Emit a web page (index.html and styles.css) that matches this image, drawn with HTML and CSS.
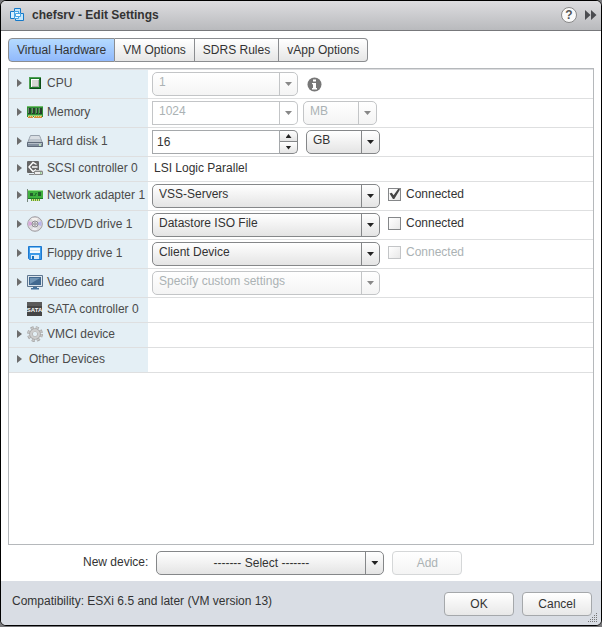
FILE: index.html
```html
<!DOCTYPE html>
<html lang="en">
<head>
<meta charset="utf-8">
<title>chefsrv - Edit Settings</title>
<link rel="stylesheet" href="styles.css">
</head>
<body>
<main class="dialog">
  <header class="titlebar">
    <svg class="vm-icon" width="16" height="16" viewBox="0 0 16 16" stroke="#1679c8">
      <path d="M5.500 1.500h6v8h-6z" fill="#bfe5fc"/><path d="M1.500 4.500h8v7h-8z" fill="#d9f0ff"/><path d="M6.500 6.500h8v7h-8z" fill="#c5e8fd"/><path d="M5.500 4.500h4v7h-4z" fill="#f2fbff" stroke="#4aa5e4"/><path d="M6.500 6.500h5v3h-5z" fill="#f2fbff" stroke="#4aa5e4"/>
    </svg>
    <h1 class="title">chefsrv - Edit Settings</h1>
    <button class="icon-button help" aria-label="Help">?</button>
    <button class="icon-button" aria-label="Expand">
      <svg width="12" height="12" viewBox="0 0 12 12" fill="#4b4c50"><path d="M0 1l5.500 5L0 11zM6 1l5.500 5L6 11z"/></svg>
    </button>
  </header>

  <div class="content">
    <div class="tabs" role="tablist">
      <button class="tab tab-active" role="tab" aria-selected="true">Virtual Hardware</button>
      <button class="tab" role="tab">VM Options</button>
      <button class="tab" role="tab">SDRS Rules</button>
      <button class="tab" role="tab">vApp Options</button>
    </div>

    <section class="panel">
      <div class="row">
        <div class="name"><button class="expander" aria-label="Expand CPU"></button>
          <svg class="icon" width="16" height="16" viewBox="0 0 16 16"><path d="M2 2h12v12H2z" fill="#1f7d2c"/><path d="M2 2h12v1H3v11H2z" fill="#4fa054"/><path d="M14 3v11H3v-1h10V3z" fill="#0b4d16"/><path d="M4 4h8v8H4z" fill="#d5d8d3"/><path d="M4 4h8v1H5v7H4z" fill="#fff"/><path d="M5 11.500h6.500V5" fill="none" stroke="#a9ada9"/></svg>
          <label for="cpu">CPU</label></div>
        <div class="value">
          <span class="select medium off"><select id="cpu" disabled><option>1</option></select></span>
          <svg class="info" width="15" height="15" viewBox="0 0 15 15"><circle cx="7.500" cy="7.500" r="7" fill="#777"/><path d="M6 2.500h3v2H6zM5 6h4v5h1v1.500H5V11h1V7.300H5z" fill="#fff"/></svg>
        </div>
      </div>
      <div class="row">
        <div class="name"><button class="expander" aria-label="Expand Memory"></button>
          <svg class="icon" width="16" height="16" viewBox="0 0 16 16"><path d="M0 2h16v11H0z" fill="#2f8f35"/><path d="M0 2h16v1H0z" fill="#6fbd6a"/><path d="M1 4h3v6H1zM5 4h3v6H5zM9 4h2v6H9zM12 4h3v6h-3z" fill="#26412c"/><path d="M1.500 4v5M5.500 4v5M9.500 4v5M12.500 4v5" stroke="#70876f"/><path d="M1 11.500h14" stroke="#8fcf76"/><path d="M1 13h5M7 13h8" stroke="#d0913a" stroke-width="2"/><path d="M1 12.500h14" stroke="#ecd486" stroke-dasharray="1 1"/></svg>
          <label for="memory">Memory</label></div>
        <div class="value">
          <span class="combo medium"><input id="memory" value="1024" disabled><button class="combo-button" aria-label="Memory sizes" disabled></button></span>
          <span class="select small off after-combo"><select aria-label="Memory unit" disabled><option>MB</option></select></span>
        </div>
      </div>
      <div class="row">
        <div class="name"><button class="expander" aria-label="Expand Hard disk 1"></button>
          <svg class="icon" width="16" height="16" viewBox="0 0 16 16"><path d="M3.500 2.500h9l3 7.500H.5z" fill="#bcc4cc" stroke="#98a2ac"/><path d="M4 3h8l1.500 3h-11z" fill="#d9dee3"/><path d="M.5 9.500h15v4H.5z" fill="#8390a0" stroke="#5f6b7a"/><path d="M1 10.500h14" stroke="#b4bec8"/><path d="M12 11h2v2h-2z" fill="#bfe0b9"/></svg>
          <label for="disk">Hard disk 1</label></div>
        <div class="value">
          <span class="stepper medium"><input id="disk" value="16"><span class="steps"><button aria-label="Increase" class="step step-up"></button><button aria-label="Decrease" class="step"></button></span></span>
          <span class="select small"><select aria-label="Disk unit"><option>GB</option></select></span>
        </div>
      </div>
      <div class="row row-short">
        <div class="name"><button class="expander" aria-label="Expand SCSI controller 0"></button>
          <svg class="icon" width="16" height="16" viewBox="0 0 16 16"><rect x="0" y="1" width="12" height="12" rx="1" fill="#666"/><path d="M9.500 4.500L6 2.500 2 7l4 4.500 3-2M5 7h5.500" fill="none" stroke="#fff" stroke-width="1.400"/><path d="M8 10h7l1 2H7z" fill="#c9cbca"/><path d="M7.500 11.500h8v3h-8z" fill="#eee" stroke="#888"/><path d="M13 12.500h1.500v1H13z" fill="#42a339"/><path d="M2 14.500h5" stroke="#888"/></svg>
          <span>SCSI controller 0</span></div>
        <div class="value"><span class="static">LSI Logic Parallel</span></div>
      </div>
      <div class="row">
        <div class="name"><button class="expander" aria-label="Expand Network adapter 1"></button>
          <svg class="icon" width="16" height="16" viewBox="0 0 16 16"><path d="M0 2h1v13H0z" fill="#74857a"/><path d="M1 3h15v9H1z" fill="#3fb03f"/><path d="M1 3h15v1H1z" fill="#93dc88"/><path d="M1 11h15v1H1z" fill="#1e7f28"/><path d="M3 6h3v3H3zM11 5h3v4h-3z" fill="#235c2c"/><path d="M6.500 8.500h2v-2H10" stroke="#1d7a29" fill="none"/><path d="M4 12h9v2H4z" fill="#4fa343"/><path d="M5.500 12v2M7.500 12v2M9.500 12v2M11.500 12v2" stroke="#e5dc78"/></svg>
          <label for="network">Network adapter 1</label></div>
        <div class="value">
          <span class="select large"><select id="network"><option>VSS-Servers</option></select></span>
          <label class="check"><input type="checkbox" checked>Connected</label>
        </div>
      </div>
      <div class="row">
        <div class="name"><button class="expander" aria-label="Expand CD/DVD drive 1"></button>
          <svg class="icon" width="16" height="16" viewBox="0 0 16 16"><circle cx="8" cy="8" r="7.300" fill="#dcdadd" stroke="#a19ea3"/><path d="M8 8L1.500 5v5z" fill="#d9a8dd"/><path d="M8 8l6.500-3v5z" fill="#b9b5ea"/><path d="M8 8L4 2h7z" fill="#f3f1ef"/><path d="M8 8l-3 6h5z" fill="#efeff2"/><circle cx="8" cy="8" r="3" fill="#e5e5e5" stroke="#8c8a90"/><circle cx="8" cy="8" r="1.200" fill="#fff" stroke="#858088"/></svg>
          <label for="cd">CD/DVD drive 1</label></div>
        <div class="value">
          <span class="select large"><select id="cd"><option>Datastore ISO File</option></select></span>
          <label class="check"><input type="checkbox">Connected</label>
        </div>
      </div>
      <div class="row">
        <div class="name"><button class="expander" aria-label="Expand Floppy drive 1"></button>
          <svg class="icon" width="16" height="16" viewBox="0 0 16 16"><path d="M1.500 1.500h13v13h-12l-1-1z" fill="#3c9ae8" stroke="#1d78d0"/><path d="M3 2h10v6H3z" fill="#f4faff"/><path d="M3 2h10v1H3z" fill="#73bcf2"/><path d="M3 5.500h10" stroke="#cfe6f7"/><path d="M4 10h8v4H4z" fill="#dcecf9"/><path d="M5 11h2v3H5z" fill="#176fb9"/></svg>
          <label for="floppy">Floppy drive 1</label></div>
        <div class="value">
          <span class="select large"><select id="floppy"><option>Client Device</option></select></span>
          <label class="check check-off"><input type="checkbox" disabled>Connected</label>
        </div>
      </div>
      <div class="row">
        <div class="name"><button class="expander" aria-label="Expand Video card"></button>
          <svg class="icon" width="16" height="16" viewBox="0 0 16 16"><path d="M.5 1.500h15v11H.5z" fill="#dce5ec" stroke="#5d7690"/><path d="M2 3h12v8H2z" fill="#42698f"/><path d="M3 4h10L3 10z" fill="#7195b5"/><path d="M6 13h4v1h2v1.500H4V14h2z" fill="#44719b"/></svg>
          <label for="video">Video card</label></div>
        <div class="value">
          <span class="select large off"><select id="video" disabled><option>Specify custom settings</option></select></span>
        </div>
      </div>
      <div class="row row-short">
        <div class="name name-leaf">
          <svg class="icon" width="16" height="16" viewBox="0 0 16 16"><path d="M0 1h15v14H0z" fill="#454545"/><path d="M0 1h15v4H0z" fill="#5b5b5b"/><text class="sata" x="7.500" y="11" text-anchor="middle">SATA</text></svg>
          <span>SATA controller 0</span></div>
        <div class="value"></div>
      </div>
      <div class="row row-short">
        <div class="name"><button class="expander" aria-label="Expand VMCI device"></button>
          <svg class="icon" width="16" height="16" viewBox="0 0 16 16"><circle cx="8" cy="8" r="6.400" fill="none" stroke="#a0a0a0" stroke-width="3" stroke-dasharray="2.900 2.126"/><circle cx="8" cy="8" r="6.300" fill="none" stroke="#c8c8c8" stroke-width="2" stroke-dasharray="2.300 2.648" stroke-dashoffset="-.3"/><circle cx="8" cy="8" r="4" fill="#e4eff5" stroke="#a6a6a6" stroke-width="3.600"/><circle cx="8" cy="8" r="3.800" fill="none" stroke="#cecece" stroke-width="2.400"/></svg>
          <span>VMCI device</span></div>
        <div class="value"></div>
      </div>
      <div class="row row-short">
        <div class="name"><button class="expander" aria-label="Expand Other Devices"></button><span class="name-plain">Other Devices</span></div>
        <div class="value"></div>
      </div>
    </section>

    <div class="new-device">
      <label for="device">New device:</label>
      <span class="select large centered"><select id="device"><option>------- Select -------</option></select></span>
      <button class="button" disabled>Add</button>
    </div>
  </div>

  <footer class="footer">
    <span class="compatibility">Compatibility: ESXi 6.5 and later (VM version 13)</span>
    <button class="button">OK</button>
    <button class="button">Cancel</button>
    <svg class="grip" width="10" height="10" viewBox="0 0 10 10" stroke="#777" stroke-dasharray="1 1"><path d="M8 .5h1M6 2.500h4M4 4.500h6M2 6.500h8M0 8.500h10"/></svg>
  </footer>
</main>
</body>
</html>
```
FILE: styles.css
```css
* {
  box-sizing: border-box;
}

body {
  margin: 0;
  min-height: 100vh;
  display: flex;
  padding: 0 0 1px;
  background: #77777a;
  color: #333;
  font: 12px/14px "Liberation Sans", Arial, sans-serif;
}

button,
input,
select {
  margin: 0;
  color: inherit;
  font: inherit;
}

.dialog {
  flex: 1;
  display: flex;
  flex-direction: column;
  border: 1px solid #000;
  border-radius: 6px;
  background: #fff;
  overflow: hidden;
}

.titlebar {
  display: flex;
  align-items: center;
  height: 30px;
  padding: 0 4px 2px 8px;
  border-bottom: 1px solid #77787b;
  background: linear-gradient(#dddde0, #b9babd);
}

.title {
  flex: 1;
  margin: 0 0 0 7px;
  font-size: 12px;
  line-height: 14px;
}

.icon-button {
  display: flex;
  margin-left: 8px;
  padding: 0;
  border: 0;
  background: none;
}

.help {
  justify-content: center;
  align-items: center;
  width: 16px;
  height: 16px;
  border: 1px solid #888;
  border-radius: 50%;
  background: #fafafa;
  color: #555;
  font-weight: bold;
}

.content {
  flex: 1;
  display: flex;
  flex-direction: column;
  padding: 7px 7px 6px;
}

.tabs {
  display: flex;
}

.tab {
  height: 24px;
  padding: 0 8px;
  border: 1px solid #8b8d90;
  border-left-width: 0;
  background: linear-gradient(#fff, #e6e6e6);
}

.tab:first-child {
  border-left-width: 1px;
  border-radius: 4px 0 0 4px;
}

.tab:last-child {
  border-radius: 0 4px 4px 0;
}

.tab-active {
  background: linear-gradient(#b5dafe, #91b9fc);
}

.panel {
  flex: 1;
  margin-top: 6px;
  padding-top: 1px;
  border: 1px solid #b5b8bb;
  box-shadow: inset 0 1px #dcdde0;
}

.row {
  display: grid;
  grid-template-columns: 139px 1fr;
  height: 29px;
  border-bottom: 1px solid #dedfe0;
}

.row-short {
  height: 25px;
}

.name {
  display: flex;
  align-items: center;
  padding: 0 0 2px 8px;
  background: #e4eff5;
  color: #4b4b4b;
  white-space: nowrap;
}

.expander {
  width: 5px;
  height: 8px;
  padding: 0;
  border: 0;
  background: #6c6c6c;
  clip-path: polygon(0 0, 100% 50%, 0 100%);
}

.icon {
  margin: 0 4px 0 5px;
}

.name-leaf .icon {
  margin-left: 10px;
}

.sata {
  fill: #fff;
  font-size: 6px;
  font-weight: bold;
}

.name-plain {
  margin-left: 7px;
}

.value {
  display: flex;
  align-items: center;
  gap: 8px;
  padding-left: 4px;
}

.static {
  padding: 0 0 2px 2px;
}

.medium {
  width: 146px;
}

.small {
  width: 74px;
}

.large {
  width: 228px;
}

.after-combo {
  margin-left: -3px;
}

.select {
  position: relative;
  display: flex;
  height: 24px;
}

.select select {
  width: 100%;
  padding: 0 20px 4px 6px;
  border: 1px solid #858789;
  border-radius: 5px;
  background: linear-gradient(#fff, #e4e4e4);
  appearance: none;
}

.select::before {
  content: "";
  position: absolute;
  inset: 1px 18px 1px auto;
  width: 1px;
  background: #858789;
}

.select::after {
  content: "";
  position: absolute;
  right: 6px;
  top: 10px;
  width: 7px;
  height: 4px;
  background: #222;
  clip-path: polygon(0 0, 100% 0, 50% 100%);
}

.off select {
  border-color: #c3c5c7;
  background: linear-gradient(#fff, #f4f4f4);
  color: #abb2b4;
  opacity: 1;
}

.off::before {
  background: #c3c5c7;
}

.off::after {
  background: #888;
}

.select.centered select {
  padding: 0 24px 0 6px;
  text-align: center;
  text-align-last: center;
}

.combo,
.stepper {
  display: flex;
  height: 24px;
}

.combo input,
.stepper input {
  flex: 1;
  min-width: 0;
  padding: 0 4px;
  border: 1px solid #a5a8ab;
  background: #fff;
}

.combo input {
  padding: 0 6px 4px;
  border-color: #c3c5c7;
  color: #abb2b4;
}

.combo-button {
  display: grid;
  place-items: center;
  width: 18px;
  padding: 0;
  border: 1px solid #c3c5c7;
  border-left: 0;
  border-radius: 0 5px 5px 0;
  background: #fff;
}

.combo-button::after,
.step::after {
  content: "";
  width: 7px;
  height: 4px;
  background: #888;
  clip-path: polygon(0 0, 100% 0, 50% 100%);
}

.steps {
  display: grid;
  grid-template-rows: 1fr 1fr;
  width: 18px;
}

.step {
  display: grid;
  place-items: center;
  padding: 0;
  border: 1px solid #858789;
  border-width: 0 1px 1px 0;
  border-radius: 0 0 5px 0;
  background: linear-gradient(#fff, #e4e4e4);
}

.step-up {
  border-width: 1px 1px 1px 0;
  border-radius: 0 5px 0 0;
}

.step::after {
  width: 6px;
  background: #222;
}

.step-up::after {
  clip-path: polygon(50% 0, 100% 100%, 0 100%);
}

.check {
  display: flex;
  align-items: center;
  gap: 5px;
  padding-bottom: 4px;
}

.check input {
  display: grid;
  width: 13px;
  height: 13px;
  border: 1px solid #858789;
  background: linear-gradient(135deg, #fff, #e8e8e8);
  appearance: none;
}

.check input:checked::before {
  content: "";
  background: #444;
  clip-path: polygon(5% 45%, 25% 38%, 42% 62%, 86% 0, 100% 8%, 48% 95%, 36% 95%);
}

.check-off {
  color: #abb2b4;
}

.check-off input {
  border-color: #c3c5c7;
}

.info {
  margin-left: 1px;
}

.new-device {
  display: flex;
  align-items: center;
  justify-content: flex-start;
  gap: 8px;
  margin-top: 6px;
  padding-left: 75px;
}

.new-device label {
  padding-bottom: 2px;
}

.button {
  width: 70px;
  height: 24px;
  padding: 0;
  border: 1px solid #a5a8ab;
  border-radius: 4px;
  background: linear-gradient(#fff, #e8e8e8);
}

.button:disabled {
  border-color: #d5d7d8;
  background: linear-gradient(#fff, #f4f4f4);
  color: #abb2b4;
}

.footer {
  position: relative;
  display: flex;
  align-items: center;
  gap: 8px;
  height: 44px;
  padding: 2px 9px 0 11px;
  background: #d9dde4;
}

.compatibility {
  flex: 1;
  padding-bottom: 6px;
}

.grip {
  position: absolute;
  right: 3px;
  bottom: 2px;
}
```
